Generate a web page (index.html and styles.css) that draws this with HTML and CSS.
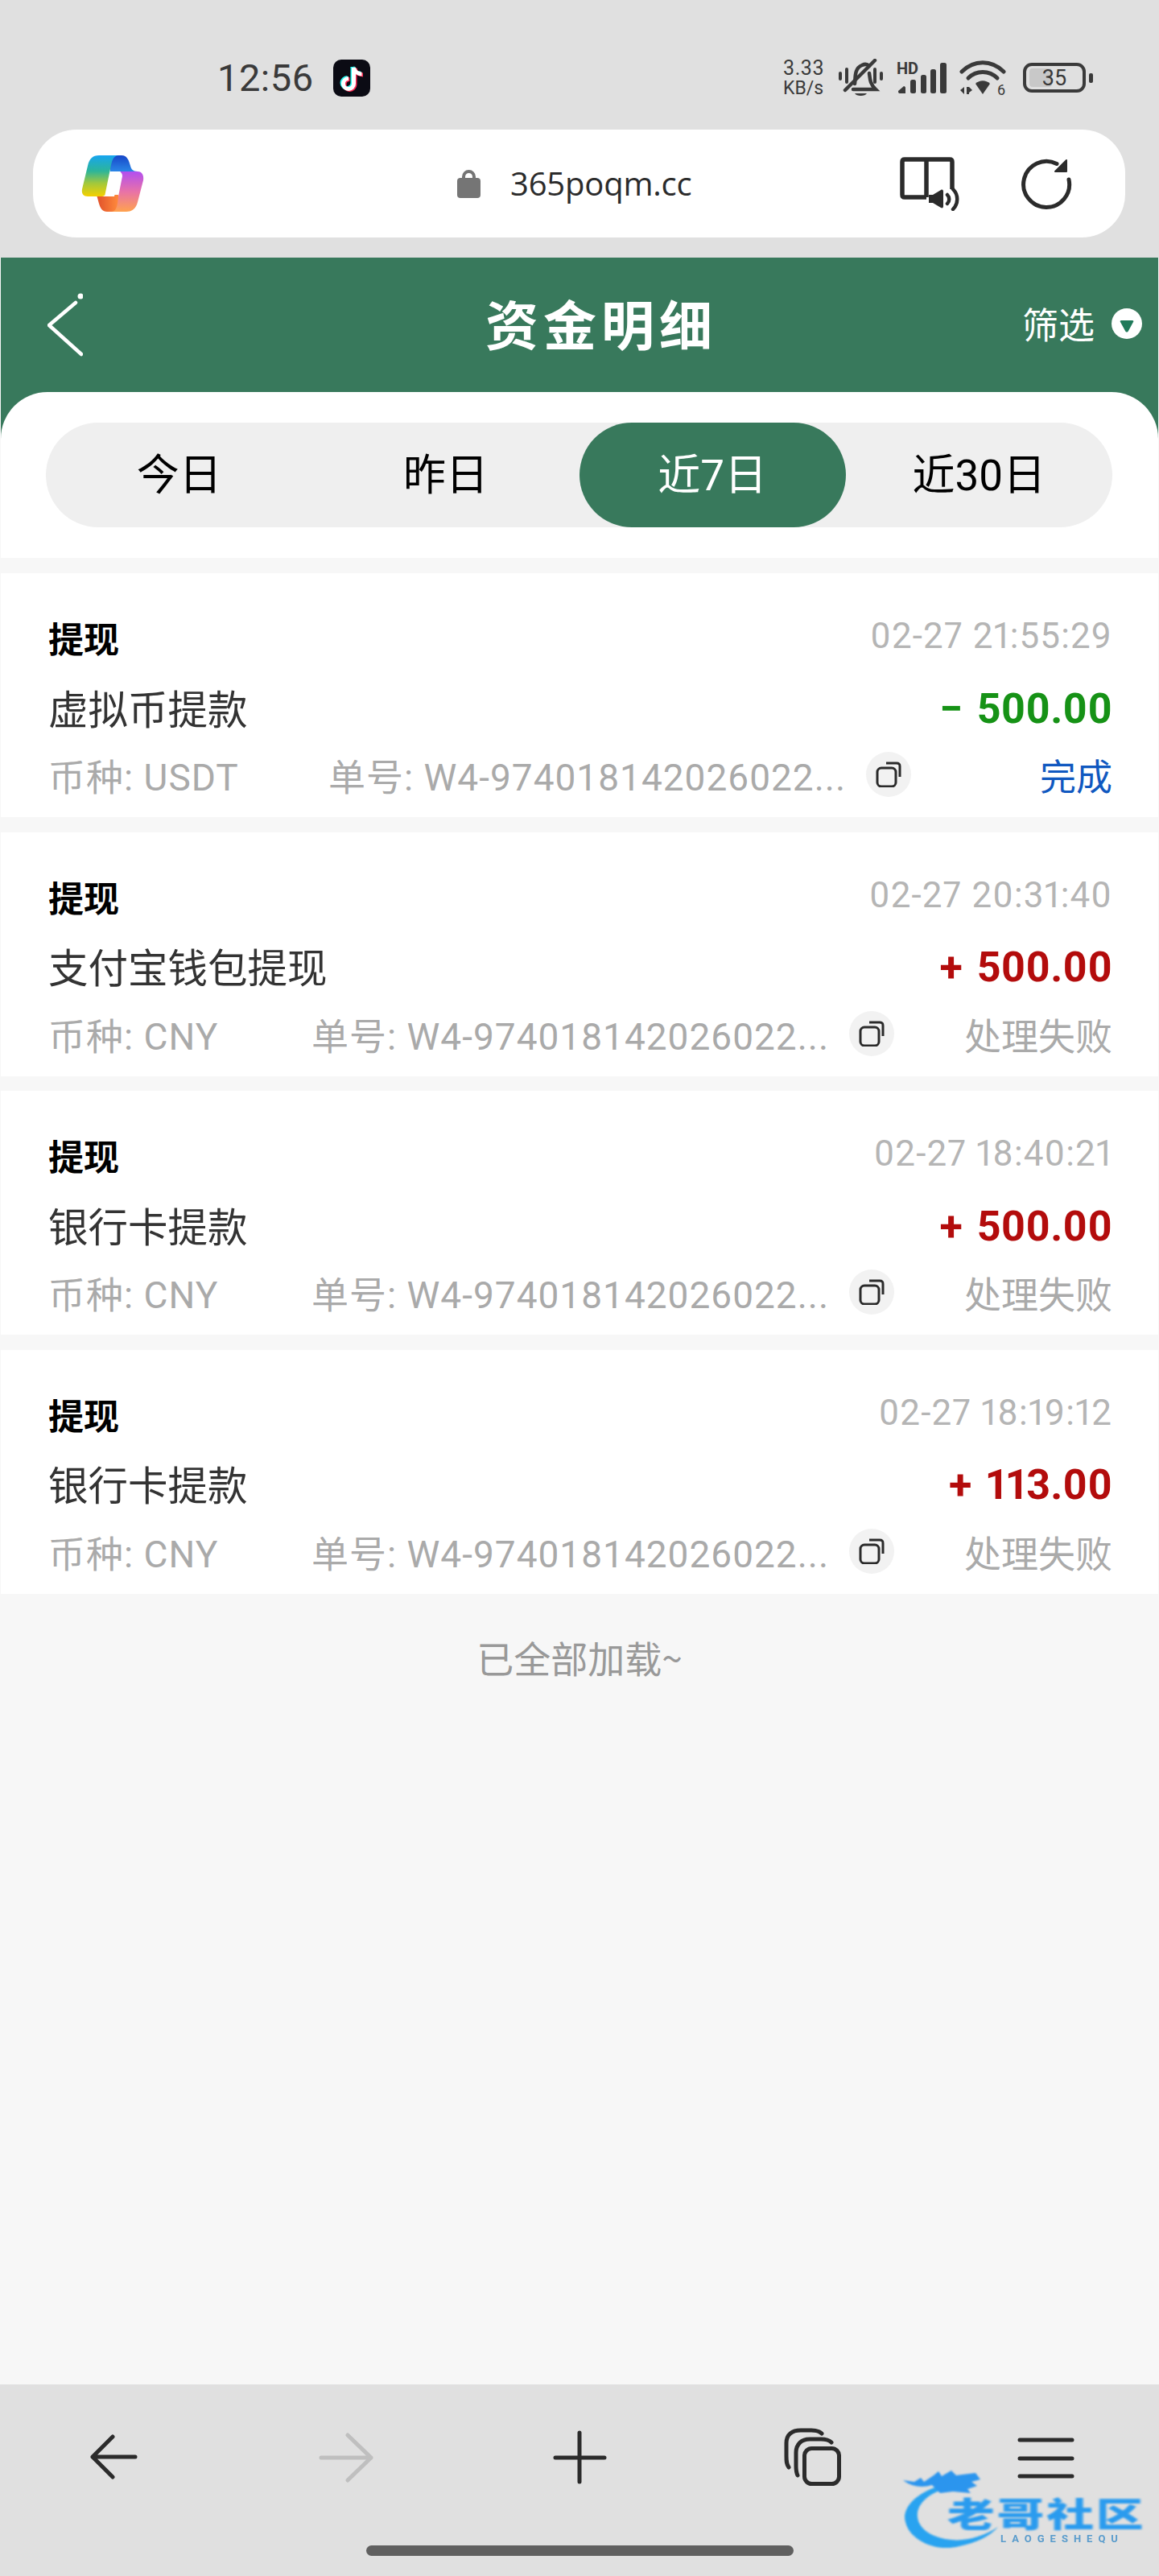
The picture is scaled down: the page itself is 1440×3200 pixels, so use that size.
FILE: index.html
```html
<!DOCTYPE html>
<html lang="zh-CN">
<head>
<meta charset="utf-8">
<title>资金明细</title>
<link rel="stylesheet" href="styles.css">
</head>
<body>
<div class="phone">
  <div class="chrome">
    <div class="status">
      <span class="clock">12:56</span>
      <svg class="tiktok" viewBox="0 0 46 46" width="46" height="46">
        <rect width="46" height="46" rx="10" fill="#0b0b14"/>
        <g fill="none" stroke-width="5">
          <path stroke="#25f4ee" d="M24 9V29a6.500 6.500 0 1 1-6.500-6.500"/>
          <path stroke="#25f4ee" d="M24 9C25 14 29 17 34 17"/>
          <path stroke="#fe2c55" d="M27 11V31a6.500 6.500 0 1 1-6.500-6.500"/>
          <path stroke="#fe2c55" d="M27 11C28 16 32 19 37 19"/>
          <path stroke="#fff" d="M25.500 10V30a6.500 6.500 0 1 1-6.500-6.500"/>
          <path stroke="#fff" d="M25.500 10C26.500 15 30.500 18 35.500 18"/>
        </g>
      </svg>
      <div class="speed"><span class="speed-num">3.33</span><span>KB/s</span></div>
      <svg class="st-bell" viewBox="0 0 55 47" width="55" height="47">
        <g fill="#3a3a3a">
          <rect x="0" y="16" width="4" height="11" rx="2"/>
          <rect x="8" y="11" width="4" height="20" rx="2"/>
          <rect x="43" y="11" width="4" height="20" rx="2"/>
          <rect x="51" y="16" width="4" height="11" rx="2"/>
          <path d="M20 43H35C33 47 22 47 20 43Z"/>
        </g>
        <g fill="none" stroke="#3a3a3a" stroke-width="4.500" stroke-linecap="round">
          <path d="M20 31C21 24 19 12 29 8C33 6 36 7 38 9"/>
          <path d="M38 18C39 26 39 31 46 38H18"/>
          <path d="M8 39L45 2"/>
        </g>
      </svg>
      <svg class="st-signal" viewBox="0 -8 62 56" width="62" height="56">
        <text x="0" y="15" class="st-hd">HD</text>
        <g fill="#3a3a3a">
          <path d="M2 36L9 30C10 30 11 31 11 32V39H4C2 39 2 37 2 36Z"/>
          <rect x="17" y="22" width="7" height="17" rx="2.500"/>
          <rect x="30" y="16" width="7" height="23" rx="2.500"/>
          <rect x="42" y="9" width="7" height="30" rx="2.500"/>
          <rect x="54" y="1" width="8" height="38" rx="2.500"/>
        </g>
      </svg>
      <svg class="st-wifi" viewBox="0 -8 59 60" width="59" height="60">
        <g fill="none" stroke="#3a3a3a" stroke-width="5" stroke-linecap="round">
          <path d="M3 14C18 -1 40 -1 55 14"/>
          <path d="M11 22C21 12 37 12 47 22"/>
        </g>
        <path d="M20 29C25 24 33 24 38 29L29 42Z" fill="#3a3a3a"/>
        <path d="M1 37L6 33V42ZM9 33H12V42H9ZM12 33L16 37L12 40Z" fill="#3a3a3a"/>
        <text x="47" y="43" class="st-six">6</text>
      </svg>
      <svg class="st-batt" viewBox="0 0 87 37" width="87" height="37">
        <rect x="2" y="2" width="74" height="33" rx="9" fill="none" stroke="#3a3a3a" stroke-width="4"/>
        <rect x="8" y="7" width="28" height="23" rx="4" fill="#c8c8c8"/>
        <rect x="82" y="13" width="5" height="12" rx="2" fill="#3a3a3a"/>
        <text x="39" y="28" class="st-level">35</text>
      </svg>
    </div>
    <div class="urlbar">
      <svg class="copilot" viewBox="0 0 78 70" width="78" height="70">
        <defs>
          <linearGradient id="cpA" x1="0" y1="0" x2="0" y2="1">
            <stop offset="0" stop-color="#17a5f0"/>
            <stop offset=".38" stop-color="#2cb59a"/>
            <stop offset=".68" stop-color="#a2c83c"/>
            <stop offset="1" stop-color="#f5d000"/>
          </linearGradient>
          <linearGradient id="cpB" x1="0" y1="0" x2="0" y2="1">
            <stop offset="0" stop-color="#b24ff0"/>
            <stop offset=".5" stop-color="#e872a8"/>
            <stop offset="1" stop-color="#ffa24e"/>
          </linearGradient>
          <linearGradient id="cpC" x1="0" y1="0" x2="0" y2="1">
            <stop offset="0" stop-color="#1646c8"/>
            <stop offset="1" stop-color="#2b86e6"/>
          </linearGradient>
          <linearGradient id="cpD" x1="0" y1="0" x2="1" y2="0">
            <stop offset="0" stop-color="#e0502a"/>
            <stop offset="1" stop-color="#ff8a3c"/>
          </linearGradient>
        </defs>
        <path fill="url(#cpC)" d="M36 0H50C57 0 59 6 61 13C62 17 64 20 70 20H36Z"/>
        <path fill="url(#cpD)" d="M19 49H46V70H32C26 70 24 66 22 60Z"/>
        <path fill="url(#cpA)" d="M22 0H46C39 1 38 7 36 17L29 51H8C3 51 0 48 1 42L8 13C10 4 14 0 22 0Z"/>
        <path fill="url(#cpB)" d="M47 20H70C75 20 78 24 77 31L70 58C68 66 63 70 56 70H38C44 69 45 62 46 51L51 26C51 23 50 21 47 20Z"/>
        <path fill="#fff" d="M40 20H49C47 22 47 25 46 30L41 51H26C31 50 33 45 34 40L37 25C38 22 38 21 40 20Z"/>
      </svg>
      <svg class="lock" viewBox="0 0 29 35" width="29" height="35">
        <path d="M8 12V8.500a6.500 6.500 0 0 1 13 0V12" fill="none" stroke="#757575" stroke-width="4"/>
        <rect y="10" width="29" height="25" rx="4" fill="#757575"/>
      </svg>
      <span class="host">365poqm.cc</span>
      <svg class="read" viewBox="0 0 74 67" width="74" height="67">
        <g fill="none" stroke="#2b2b2b" stroke-width="5.500" stroke-linejoin="round">
          <path d="M33 50H6C4 50 3 49 3 47V6C3 4 4 3 6 3H62C64 3 65 4 65 6V40"/>
          <path d="M33 3V50"/>
        </g>
        <path d="M36 47H41L51 41C53 40 54 41 54 43V61C54 63 53 64 51 63L41 57H36Z" fill="#2b2b2b"/>
        <g fill="none" stroke="#2b2b2b" stroke-width="4.500" stroke-linecap="round">
          <path d="M59 47C62 50 62 55 59 58"/>
          <path d="M66 40C73 47 73 58 66 65"/>
        </g>
      </svg>
      <svg class="reload" viewBox="0 0 64 64" width="64" height="64">
        <path d="M60 27A28.500 28.500 0 1 1 45 7.500" fill="none" stroke="#2b2b2b" stroke-width="5" stroke-linecap="round"/>
        <path d="M57 3V17H43Z" fill="#2b2b2b" stroke="#2b2b2b" stroke-width="2" stroke-linejoin="round"/>
      </svg>
    </div>
  </div>

  <div class="top">
    <header class="head">
      <svg class="back" viewBox="0 0 44 80" width="44" height="80">
        <path d="M35 12L2 40L42 76" fill="none" stroke="#fff" stroke-width="4.500" stroke-linecap="round" stroke-linejoin="round"/>
        <circle cx="41" cy="4" r="3.500" fill="#fff"/>
      </svg>
      <h1 class="title">资金明细</h1>
      <div class="filter">
        <span>筛选</span>
        <svg viewBox="0 0 38 38" width="38" height="38">
          <circle cx="19" cy="19" r="19" fill="#fff"/>
          <path d="M12 15H26C27 15 28 16 27 17L21 28C20 30 18 30 17 28L11 17C10 16 11 15 12 15Z" fill="#1f7a5a"/>
        </svg>
      </div>
    </header>
    <section class="sheet">
      <div class="tabs">
        <div class="tab">今日</div>
        <div class="tab">昨日</div>
        <div class="tab tab-on">近7日</div>
        <div class="tab">近30日</div>
      </div>
    </section>
  </div>

  <main class="list">
    <article class="card">
      <div class="row">
        <span class="kind">提现</span>
        <span class="time">02-27 21:55:29</span>
      </div>
      <div class="row">
        <span class="name">虚拟币提款</span>
        <span class="amt amt-out">− 500.00</span>
      </div>
      <div class="row meta">
        <span class="cur">币种: USDT</span>
        <span class="order order-wide">单号: W4-974018142026022...</span>
        <span class="copy"><svg viewBox="0 0 32 32" width="32" height="32"><use href="#copy-glyph"/></svg></span>
        <span class="state state-done">完成</span>
      </div>
    </article>
    <article class="card">
      <div class="row">
        <span class="kind">提现</span>
        <span class="time">02-27 20:31:40</span>
      </div>
      <div class="row">
        <span class="name">支付宝钱包提现</span>
        <span class="amt">+ 500.00</span>
      </div>
      <div class="row meta">
        <span class="cur">币种: CNY</span>
        <span class="order">单号: W4-974018142026022...</span>
        <span class="copy"><svg viewBox="0 0 32 32" width="32" height="32"><use href="#copy-glyph"/></svg></span>
        <span class="state">处理失败</span>
      </div>
    </article>
    <article class="card">
      <div class="row">
        <span class="kind">提现</span>
        <span class="time">02-27 18:40:21</span>
      </div>
      <div class="row">
        <span class="name">银行卡提款</span>
        <span class="amt">+ 500.00</span>
      </div>
      <div class="row meta">
        <span class="cur">币种: CNY</span>
        <span class="order">单号: W4-974018142026022...</span>
        <span class="copy"><svg viewBox="0 0 32 32" width="32" height="32"><use href="#copy-glyph"/></svg></span>
        <span class="state">处理失败</span>
      </div>
    </article>
    <article class="card">
      <div class="row">
        <span class="kind">提现</span>
        <span class="time">02-27 18:19:12</span>
      </div>
      <div class="row">
        <span class="name">银行卡提款</span>
        <span class="amt">+ 113.00</span>
      </div>
      <div class="row meta">
        <span class="cur">币种: CNY</span>
        <span class="order">单号: W4-974018142026022...</span>
        <span class="copy"><svg viewBox="0 0 32 32" width="32" height="32"><use href="#copy-glyph"/></svg></span>
        <span class="state">处理失败</span>
      </div>
    </article>
    <p class="end">已全部加载~</p>
  </main>

  <nav class="nav">
    <div class="nav-icons">
      <svg viewBox="0 0 80 80" width="80" height="80"><path class="ln" d="M68 39H15M40 14L15 39L40 64"/></svg>
      <svg viewBox="0 0 80 80" width="80" height="80"><path class="ln ln-off" d="M9 40H71M42 12L71 40L42 68"/></svg>
      <svg viewBox="0 0 80 80" width="80" height="80"><path class="ln" d="M10 40H71M40 9V70"/></svg>
      <svg viewBox="0 0 80 80" width="80" height="80">
        <rect class="ln" x="29.500" y="28.500" width="43" height="44" rx="9"/>
        <path class="ln" d="M21 62C19 58 19 54 19 50V34C19 23 26 17 36 17H50C56 17 60 18 63 21"/>
        <path class="ln" d="M10 52C7 48 7 44 7 38V22C7 11 14 6 25 6H38C44 6 48 7 51 10"/>
      </svg>
      <svg viewBox="0 0 80 80" width="80" height="80"><path class="ln" d="M7 18H72M7 41H72M7 63H72"/></svg>
    </div>
    <div class="home-bar"></div>
    <div class="mark">
      <svg class="mark-art" viewBox="0 0 130 104" width="130" height="104">
        <path d="M48 20C14 30 -2 50 3 66C8 88 40 104 70 96C90 92 108 84 118 72C100 84 78 90 60 88C38 86 20 76 18 60C16 44 32 30 54 24Z" fill="#29a3f0"/>
        <path d="M0 14L14 16L22 11L26 16L38 8L44 3L48 9L60 2L66 8L90 5L96 13L85 16L92 21L80 25L84 30L62 28L46 30L36 20C24 24 10 22 0 14Z" fill="#2b95ee"/>
      </svg>
      <span class="mark-name">老哥社区</span>
      <span class="mark-sub">LAOGESHEQU</span>
    </div>
  </nav>
</div>

<svg class="defs" width="0" height="0" aria-hidden="true">
  <symbol id="copy-glyph" viewBox="0 0 32 32">
    <rect x="2" y="8" width="23" height="23" rx="5" fill="none" stroke="#2a2a2a" stroke-width="3"/>
    <path d="M13 2H26C29 2 30 3 30 6V19" fill="none" stroke="#2a2a2a" stroke-width="3"/>
  </symbol>
</svg>
</body>
</html>
```

FILE: styles.css
```css
* { box-sizing: border-box; }

html, body { margin: 0; padding: 0; }

body {
  font-family: "Noto Sans CJK SC", "Noto Sans", sans-serif;
  background: #f7f7f7;
}

.phone {
  width: 1440px;
  height: 3200px;
  display: flex;
  flex-direction: column;
  overflow: hidden;
}

/* browser chrome */
.chrome {
  background: #e0e0e0;
  padding-bottom: 25px;
}

.status {
  display: flex;
  align-items: center;
  height: 161px;
  padding: 73px 82px 41px 270px;
}

.clock {
  font: 400 47px/47px Roboto, sans-serif;
  letter-spacing: .5px;
  color: #3a3a3a;
}

.tiktok { margin-left: 24px; }

.speed {
  margin-left: auto;
  display: flex;
  flex-direction: column;
  font: 400 23px/25px Roboto, sans-serif;
  color: #3a3a3a;
  width: 54px;
  white-space: nowrap;
}

.speed-num {
  font-size: 25px;
  letter-spacing: .6px;
}

.st-bell { margin-left: 15px; }
.st-signal { margin-left: 17px; }
.st-wifi { margin-left: 16px; }
.st-batt { margin-left: 20px; }

.st-hd { font: 700 20px Roboto, sans-serif; fill: #3a3a3a; }
.st-six { font: 400 18px Roboto, sans-serif; fill: #3a3a3a; }
.st-level { font: 400 27px Roboto, sans-serif; fill: #3a3a3a; text-anchor: middle; }

.urlbar {
  margin: 0 42px 0 41px;
  height: 134px;
  background: #fff;
  border-radius: 54px;
  display: flex;
  align-items: center;
  padding: 0 66px 0 60px;
}

.lock { margin-left: 389px; }

.host {
  margin-left: 37px;
  font: 400 40px/1 "Open Sans", sans-serif;
  color: #2b2b2b;
  letter-spacing: -.2px;
}

.read { margin-left: auto; }
.reload { margin-left: 76px; }

/* green page header and date filter */
.top {
  margin: 0 1px;
  background: #38795c;
}

.head {
  height: 167px;
  display: flex;
  align-items: center;
  padding: 0 20px 0 58px;
}

.title {
  margin: 0 0 0 500px;
  padding-bottom: 8px;
  font-size: 66px;
  font-weight: 700;
  line-height: 1;
  letter-spacing: 6px;
  color: #fff;
  white-space: nowrap;
}

.filter {
  margin-left: auto;
  padding-bottom: 4px;
  display: flex;
  align-items: center;
  gap: 21px;
  font-size: 45px;
  line-height: 1;
  color: #fff;
}

.sheet {
  height: 206px;
  background: #fff;
  border-radius: 58px 58px 0 0;
  padding: 38px 57px 0 56px;
}

.tabs {
  display: grid;
  grid-template-columns: repeat(4, 1fr);
  height: 130px;
  background: #efefef;
  border-radius: 65px;
}

.tab {
  display: flex;
  align-items: center;
  justify-content: center;
  padding-bottom: 8px;
  border-radius: 65px;
  font-size: 53px;
  font-family: Roboto, "Noto Sans CJK SC", sans-serif;
  color: #000;
}

.tab-on {
  background: #38795c;
  color: #fff;
}

/* transaction list */
.list {
  flex: 1;
  padding-top: 19px;
}

.card {
  height: 303px;
  margin: 0 1px 18.500px;
  padding: 39px 57px 0 59px;
  background: #fff;
}

.card:last-of-type { margin-bottom: 0; }

.row {
  display: flex;
  align-items: center;
  justify-content: space-between;
  height: 86px;
}

.kind {
  padding-bottom: 4px;
  font-size: 44px;
  font-weight: 700;
  color: #000;
}

.time {
  padding-bottom: 8px;
  font: 400 44px Roboto, sans-serif;
  font-variant-numeric: proportional-nums;
  color: #b5b5b5;
  letter-spacing: 1.100px;
}

.name {
  padding-bottom: 4px;
  font-size: 49.500px;
  color: #333;
}

.amt {
  font: 700 52px Roboto, sans-serif;
  font-variant-numeric: proportional-nums;
  word-spacing: 5px;
  color: #b30c0c;
}

.amt-out { color: #169216; }

.meta {
  padding-bottom: 8px;
  justify-content: flex-start;
  font-size: 46px;
  color: #aaa;
  font-family: Roboto, "Noto Sans CJK SC", sans-serif;
}

.cur {
  width: 327px;
  white-space: nowrap;
  letter-spacing: 1px;
}

.order {
  white-space: nowrap;
  letter-spacing: 1px;
}

.order-wide { margin-left: 21px; }

.copy {
  width: 56px;
  height: 56px;
  margin-left: 25px;
  border-radius: 50%;
  background: #f2f2f2;
  display: flex;
  align-items: center;
  justify-content: center;
}

.state {
  margin-left: auto;
  white-space: nowrap;
}

.state-done {
  font-size: 45px;
  color: #1058c0;
}

.end {
  margin: 48px 0 0;
  text-align: center;
  font-size: 46px;
  line-height: 60px;
  color: #999;
}

.defs { position: absolute; }

/* browser bottom toolbar */
.nav {
  position: relative;
  height: 238px;
  background: #e0e0e0;
  padding-top: 51px;
}

.nav-icons {
  display: flex;
  gap: 210px;
  padding-left: 100px;
}

.ln {
  fill: none;
  stroke: #2b2b2b;
  stroke-width: 5;
  stroke-linecap: round;
  stroke-linejoin: round;
}

.ln-off { stroke: #bfbfbf; }

.home-bar {
  width: 531px;
  height: 13px;
  margin: 69px auto 0;
  border-radius: 7px;
  background: #606060;
}

/* community watermark floating over the toolbar */
.mark {
  position: absolute;
  left: 1122px;
  top: 105px;
  width: 300px;
  height: 104px;
  color: #2a9bee;
}

.mark-art {
  position: absolute;
  left: 0;
  top: 0;
  filter: blur(1px);
}

.mark-name {
  position: absolute;
  left: 55px;
  top: 33px;
  font-size: 42px;
  font-weight: 900;
  line-height: 42px;
  letter-spacing: 2px;
  white-space: nowrap;
  transform: scaleX(1.4);
  transform-origin: left center;
  filter: blur(1px);
}

.mark-sub {
  position: absolute;
  left: 121px;
  top: 80px;
  font: 700 13px/1 Roboto, sans-serif;
  letter-spacing: 7px;
  color: #5a9ccc;
  white-space: nowrap;
  filter: blur(.6px);
}
```
